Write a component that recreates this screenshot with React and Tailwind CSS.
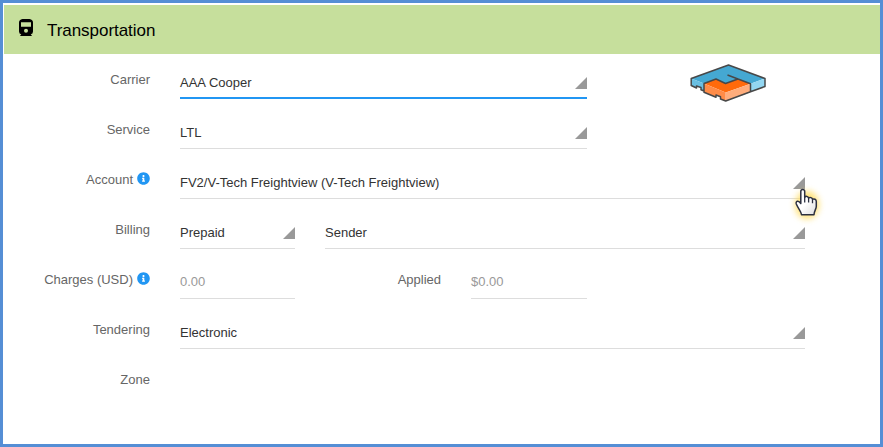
import { FaInfoCircle } from "react-icons/fa";

function Label({ children, info, className = "w-[150px]" }) {
  return (
    <div className={`${className} flex h-7 shrink-0 justify-end gap-1 leading-[18px] text-[#666]`}>
      <span className="whitespace-nowrap">{children}</span>
      {info && <FaInfoCircle className="mt-px size-[13px] text-[#2196f3]" />}
    </div>
  );
}

function Select({ value, className, active }) {
  return (
    <div
      className={`${className} flex h-[26px] shrink-0 justify-between ${
        active ? "border-b-2 border-[#2196f3]" : "border-b border-[#ddd]"
      }`}
    >
      <span className="whitespace-nowrap leading-5 text-[#333]">{value}</span>
      <svg viewBox="0 0 12 12" className="mt-1 size-3 shrink-0">
        <path d="M12 0V12H0Z" fill="#999" />
      </svg>
    </div>
  );
}

function Amount({ value, className }) {
  return (
    <div className={`${className} h-[27px] shrink-0 border-b border-[#ddd] leading-5 text-[#999]`}>
      {value}
    </div>
  );
}

function TrainIcon() {
  return (
    <svg viewBox="0 0 14 17" className="mb-[5px] ml-[15px] h-[17px] w-3.5">
      <path
        fillRule="evenodd"
        d="M3.500 0h7Q14 .5 14 3.500v9Q14 15 11.700 15.300l1 1V17H1.300v-.7l1-1Q0 15 0 12.500v-9Q0 .5 3.500 0ZM2 3.300v4.500h10V3.300ZM7 9.800a2 2 0 1 0 0 4 2 2 0 0 0 0-4Z"
      />
    </svg>
  );
}

function Logo() {
  return (
    <svg viewBox="0 0 76 38" className="-mb-[3px] ml-[103px] h-[38px] w-[76px] shrink-0" strokeLinejoin="round">
      <path d="M1.200 14.500 38.500 1 75 14.500 60.500 19.700 48 15 35.500 19.500 26 15 14 19.500Z" fill="#45a8d2" />
      <path d="M1.200 14.500 14 19.500V27L11 25.800v-2.300L6.500 22v2L1.200 21.500Z" fill="#69bfe2" />
      <path d="M60.500 19.700 75 14.500v8L60.500 27.700Z" fill="#93d7f2" />
      <path d="m14 19.500 12-4.500 9.500 4.500L48 15l12.500 4.700-24.800 8.800Z" fill="#ff6a0b" />
      <path d="m14 19.500 21.700 9V37L30.500 35v-2.300L26 31v2.300l-12-5Z" fill="#ff8c48" />
      <path d="m35.700 28.500 24.800-8.800v8.500L35.700 37Z" fill="#ffad7c" />
      <g fill="none" stroke="#484848" strokeWidth="1.500">
        <path d="M14 27l-3-1.200v-2.300L6.500 22v2L1.200 21.500v-7L38.500 1 75 14.500v8l-14.500 5.200L35.700 37 30.500 35v-2.300L26 31v2.300l-12-5v-8.800L26 15l9.500 4.500L48 15l-10.500-4M48 15l12.500 4.700v8" />
      </g>
    </svg>
  );
}

function Pointer() {
  return (
    <svg viewBox="0 0 46 50" className="absolute left-[780px] top-[173px] h-[50px] w-[46px]">
      <defs>
        <filter id="glow" x="-50%" y="-50%" width="200%" height="200%">
          <feGaussianBlur stdDeviation="3" />
        </filter>
        <linearGradient id="hand" x1="0" y1="0" x2="1" y2="1">
          <stop offset=".5" stopColor="#fff" />
          <stop offset="1" stopColor="#ddd" />
        </linearGradient>
      </defs>
      <ellipse cx="24" cy="29" rx="12" ry="14" fill="#ffdb58" opacity=".8" filter="url(#glow)" />
      <path
        d="M17.800 27.500V15.500c0-2.700 3.900-2.700 3.900 0v5.700c1-1.400 3.500-1 3.900.8 1.300-1 3.600-.4 3.900 1.200 1.700-.8 3.800.2 3.800 2.200v4.800c0 3-2.100 4.500-2.300 8.600H18.500c-.3-3.800-3-5.500-5.200-10.800-1-2.700 2.200-4.200 4.500-.5Z"
        fill="url(#hand)"
        stroke="#2c3040"
        strokeWidth="1.500"
        strokeLinejoin="round"
      />
      <path d="M21.700 20.500v6M25.600 22v4.500M29.500 23.200v4" stroke="#2c3040" strokeWidth="1.300" />
    </svg>
  );
}

export default function App() {
  return (
    <div className="relative h-[447px] w-[883px] overflow-hidden border-[3px] border-[#558ed5] bg-white pl-px pt-0.5 font-['Liberation_Sans',Arial,sans-serif] text-[13px]">
      <header className="flex h-[49px] items-center bg-[#c6df9c] text-black">
        <TrainIcon />
        <h1 className="ml-3.5 mt-0.5 text-[17px] leading-5 tracking-[-0.05px]">Transportation</h1>
      </header>
      <main className="-ml-1">
        <div className="flex h-[45px] items-end gap-[30px]">
          <Label>Carrier</Label>
          <Select value="AAA Cooper" className="w-[407px]" active />
          <div className="-ml-[30px] flex h-[39px] items-end">
            <Logo />
          </div>
        </div>
        <div className="flex h-[50px] items-end gap-[30px]">
          <Label>Service</Label>
          <Select value="LTL" className="w-[407px]" />
        </div>
        <div className="flex h-[50px] items-end gap-[30px]">
          <Label info>Account</Label>
          <Select value="FV2/V-Tech Freightview (V-Tech Freightview)" className="w-[625px]" />
        </div>
        <div className="flex h-[50px] items-end gap-[30px]">
          <Label>Billing</Label>
          <Select value="Prepaid" className="w-[115px]" />
          <Select value="Sender" className="w-[480px]" />
        </div>
        <div className="flex h-[50px] items-end gap-[30px]">
          <Label info>Charges (USD)</Label>
          <Amount value="0.00" className="w-[115px]" />
          <Label className="w-[116px]">Applied</Label>
          <Amount value="$0.00" className="w-[116px]" />
        </div>
        <div className="flex h-[50px] items-end gap-[30px]">
          <Label>Tendering</Label>
          <Select value="Electronic" className="w-[625px]" />
        </div>
        <div className="flex h-[50px] items-end">
          <Label>Zone</Label>
        </div>
      </main>
      <Pointer />
    </div>
  );
}
